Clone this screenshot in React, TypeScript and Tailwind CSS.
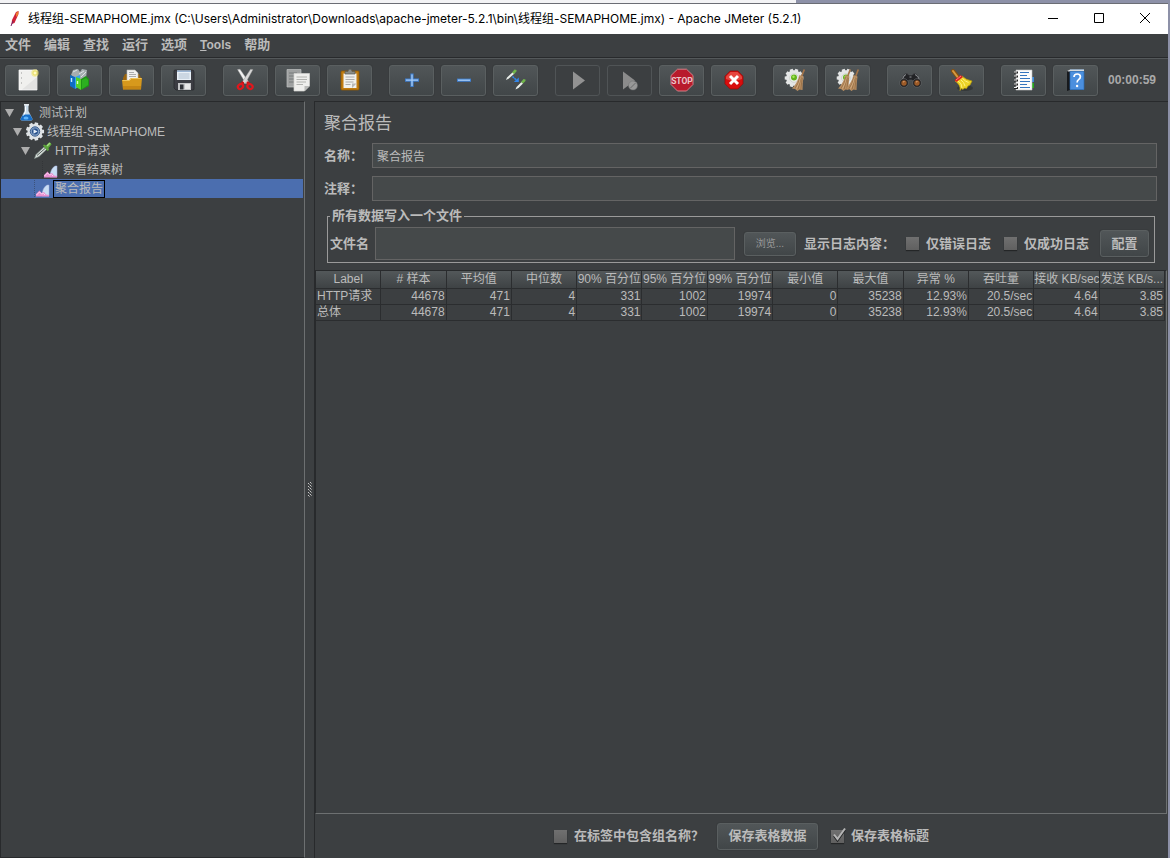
import { useState, type ReactNode } from "react";

const SANS = "font-['Liberation_Sans','Noto_Sans_CJK_SC',sans-serif]";

function Icon({ children }: { children: ReactNode }) {
  return (
    <svg width="26" height="24" viewBox="0 0 26 24" fill="none" aria-hidden="true">
      {children}
    </svg>
  );
}

function gearPath(cx: number, cy: number, inner: number, outer: number, teeth: number) {
  const points: string[] = [];
  for (let i = 0; i < teeth; i++) {
    const step = (Math.PI * 2) / teeth;
    const corners: [number, number][] = [
      [-0.36, inner],
      [-0.26, outer],
      [0.26, outer],
      [0.36, inner],
    ];
    corners.forEach(([t, r]) => {
      const a = (i + t) * step;
      points.push(`${(cx + r * Math.cos(a)).toFixed(2)} ${(cy + r * Math.sin(a)).toFixed(2)}`);
    });
  }
  return `M${points.join("L")}Z`;
}

function Gear() {
  return (
    <>
      <path d={gearPath(11, 10, 7.8, 9.4, 10)} fill="#e4e6e6" />
      <circle cx="11" cy="10" r="4.2" fill="#f4f5f3" stroke="#c4c8c2" strokeWidth=".8" />
      <circle cx="11" cy="9.5" r="3" fill="#62b31c" />
      <circle cx="10.5" cy="8.8" r="1.2" fill="#a5e85a" />
    </>
  );
}

function Besom({ x }: { x: number }) {
  return (
    <g transform={`translate(${x} 0)`}>
      <path d="M21.3 1.5 18.8 8" stroke="#a5754a" strokeWidth="1.7" />
      <path d="M16.5 7 20.5 8.5Q19.5 15 19.5 22L16.5 21.5 14.5 23 12 21 9 20.5Q14.5 15 16.5 7Z" fill="#b98f63" />
      <path d="M17 9Q15.5 16 12 20.5M18 9.5 15 21.5M19.2 10 17.8 21.5" stroke="#8f673e" strokeWidth=".7" />
      <path d="M17.5 9.5Q16.500 15 13.5 20.5" stroke="#dcb88c" strokeWidth=".7" />
    </g>
  );
}

const icons: Record<string, ReactNode> = {
  new: (
    <Icon>
      <path d="M4 2H22V22H4Z" fill="#f0f0ee" stroke="#fff" strokeWidth=".7" />
      <path d="M7 21.5H22V9Z" fill="#e2e2e1" />
      <path d="M6 5h1M6 10h1M6 15h1" stroke="#9a9a9a" />
      <circle cx="20" cy="5" r="3.7" fill="#f0e56c" opacity=".6" />
      <circle cx="20" cy="5" r="2" fill="#fffac4" stroke="#e1d74c" strokeWidth=".7" />
    </Icon>
  ),
  templates: (
    <Icon>
      <path d="M4 7 6 2l5-1 2 3 2-3 5 1-1 8-8 3Z" fill="#a5adb0" />
      <path d="M6 4l4-2M12 6l5-3M14 9l5-5" stroke="#dde2e4" />
      <path d="M3 7l5 2v12l-5-3Z" fill="#0d6cc4" />
      <path d="M8 9l5-2v11l-5 3Z" fill="#38a3ec" />
      <path d="M4.5 10v4" stroke="#bfe4ff" strokeWidth="1.4" />
      <path d="M9 9l5 2v11l-5-3Z" fill="#53d327" />
      <path d="M14 11l5-3 3 3v7l-8 4Z" fill="#1d9316" />
      <path d="M15 12l4-2 2 2v5l-6 4Z" fill="#2caf20" />
      <path d="M10.5 13v3" stroke="#d5ffc5" strokeWidth="1.4" />
    </Icon>
  ),
  open: (
    <Icon>
      <path d="M4 10 6 6h14l2 4v11H4Z" fill="#9a640d" />
      <path d="M8 2h8l3 3v9H8Z" fill="#f2f2f0" stroke="#bcbcba" strokeWidth=".6" />
      <path d="M10 4.5h5M10 6.5h7M10 8.5h7" stroke="#9a9a9a" strokeWidth=".8" />
      <path d="M3 12h7l2-2h11l-1 11.5H4Z" fill="#d7991c" />
      <path d="M3.5 12.5h7l2-2h10" stroke="#f3ca60" strokeWidth=".9" />
      <path d="M4 18h18v3.5H4Z" fill="#b9790f" opacity=".6" />
    </Icon>
  ),
  save: (
    <Icon>
      <path d="M3 3q0-1 1-1h17q2 0 2 2v17q0 1-1 1H5l-2-2Z" fill="#3c3d43" stroke="#24252a" strokeWidth=".7" />
      <path d="M6 2.5h14v9.5H6Z" fill="#e9f0f7" />
      <path d="M6 2.5h14v1.5H6Z" fill="#9cb6d4" />
      <path d="M7.5 6h11M7.5 8h11M7.5 10h11" stroke="#9eb1c5" strokeWidth=".8" />
      <path d="M7 15h13v7H7Z" fill="#c4c5c7" />
      <path d="M9 16.5h3.5v5H9Z" fill="#303237" />
      <path d="M14 16h5v5h-5Z" fill="#e8e8e8" />
    </Icon>
  ),
  cut: (
    <Icon>
      <path d="M4.500 1.500 7 1.300 15.500 13.500 13 16Z" fill="#f1f1f1" stroke="#999" strokeWidth=".4" />
      <path d="M20 1.500 17.500 1.300 9.500 13.500 12 16Z" fill="#d8d8d8" stroke="#888" strokeWidth=".4" />
      <path d="M10.5 14l-2 2M14 14l2 2" stroke="#c51117" strokeWidth="2.6" />
      <ellipse cx="7.5" cy="18.5" rx="2.8" ry="2.2" stroke="#e0171d" strokeWidth="2.2" transform="rotate(-35 7.5 18.5)" />
      <ellipse cx="17" cy="18.5" rx="2.8" ry="2.2" stroke="#e0171d" strokeWidth="2.2" transform="rotate(35 17 18.5)" />
    </Icon>
  ),
  copy: (
    <Icon>
      <path d="M2 1.5h14V19H2Z" fill="#9fa1a1" stroke="#bfc0c0" strokeWidth=".7" />
      <path d="M4 5h8M4 8h8M4 11h6M4 14h6" stroke="#737676" strokeWidth=".9" />
      <path d="M9 5.5h15.5V18l-5 5H9Z" fill="#eeeeec" stroke="#d2d2d0" strokeWidth=".7" />
      <path d="M11.5 9H22M11.5 11.5H22M11.5 14H21M11.5 16.5H18" stroke="#a9aaa8" strokeWidth=".9" />
      <path d="M19.5 23v-5h5Z" fill="#b9bab8" />
    </Icon>
  ),
  paste: (
    <Icon>
      <rect x="4" y="3" width="18" height="19" rx="1" fill="#c17d11" stroke="#8f5902" strokeWidth=".8" />
      <path d="M6.5 5.5h13V20h-13Z" fill="#f1f1ee" />
      <path d="M8.5 9h9M8.5 11.5h9M8.5 14h8M8.5 16.5h5" stroke="#a4a4a1" strokeWidth=".9" />
      <path d="M15 20v-4.5h4.5Z" fill="#b8b8b5" />
      <path d="M8 6V3.5h3Q11 1 13 1t2 2.5h3V6Z" fill="#8b8d88" stroke="#575955" strokeWidth=".7" />
    </Icon>
  ),
  plus: (
    <Icon>
      <path d="M13 5.5v13.5M6 12.2h14" stroke="#3f7fd0" strokeWidth="3.2" />
      <path d="M13 6.5v11.5M7 12.2h12" stroke="#a9cdf5" strokeWidth="1.3" />
    </Icon>
  ),
  minus: (
    <Icon>
      <path d="M6 12.2h14" stroke="#3f7fd0" strokeWidth="3.2" />
      <path d="M7 12.2h12" stroke="#a9cdf5" strokeWidth="1.3" />
    </Icon>
  ),
  toggle: (
    <Icon>
      <path d="M3 12l1-2.5L10 4l1.5 1.5-6 5.3Z" fill="#e9eeea" />
      <path d="M9 4.5l2.5-3 2 .5v1.5L11 6Z" fill="#71b54b" />
      <path d="M12.5 21.5l1-2.5 5-5 1.5 1.5-4.5 4.5Z" fill="#e9eeea" />
      <path d="M18 14l2.5-3 2 .5V13L20 15.5Z" fill="#71b54b" />
      <path d="M9.5 8.5l4.5 4" stroke="#3186eb" strokeWidth="1.6" strokeDasharray="2 .6" />
      <path d="M15.8 9.5V14h-5Z" fill="#3186eb" />
    </Icon>
  ),
  play: (
    <Icon>
      <path d="M8 3.5v18L20 12.5Z" fill="#929292" />
    </Icon>
  ),
  playNoPause: (
    <Icon>
      <path d="M6 3.5v18L18 12.5Z" fill="#8b8b8b" />
      <circle cx="16" cy="17.5" r="4.5" fill="#989898" stroke="#6c6e6e" strokeWidth=".5" />
      <path d="M13.5 20l5-5" stroke="#696b6b" />
    </Icon>
  ),
  stop: (
    <Icon>
      <path d="M8.5 1.2h9L24 7.5v9L17.5 23h-9L2 16.5v-9Z" fill="#b81b2c" stroke="#d28087" />
      <text x="13" y="15.5" textAnchor="middle" fontSize="8.5" fontWeight="700" fontFamily="Roboto, sans-serif" fill="#ecc6ca">
        STOP
      </text>
    </Icon>
  ),
  shutdown: (
    <Icon>
      <path d="M9.2 3h7.6L22 8.2v7.6L16.8 21H9.2L4 15.8V8.2Z" fill="#d80d0d" stroke="#8f0a0a" strokeWidth=".7" />
      <path d="M9.5 4h7L21 8.500V11Q13 14 5 11V8.500Z" fill="#f06a5f" opacity=".6" />
      <path d="M9 8l8 8m0-8-8 8" stroke="#fff" strokeWidth="3" />
    </Icon>
  ),
  clear: (
    <Icon>
      <Gear />
      <Besom x={0} />
    </Icon>
  ),
  clearAll: (
    <Icon>
      <Gear />
      <Besom x={-6} />
      <Besom x={2} />
    </Icon>
  ),
  search: (
    <Icon>
      <path d="M3 13 7 6.5Q10 4 12 7h3q2-3 5-.5L24 13l-5 3-4-4h-3l-4 4Z" fill="#222326" stroke="#55575a" strokeWidth=".6" />
      <path d="M7 8l2-1.5M18 6.5l2 1.5M5.5 11l1.5-3M22 11l-1.5-3M12.5 9h2" stroke="#94979b" />
      <circle cx="7" cy="15" r="4.3" fill="#1e1e20" stroke="#66686a" strokeWidth=".7" />
      <circle cx="20" cy="15" r="4.3" fill="#1e1e20" stroke="#66686a" strokeWidth=".7" />
      <circle cx="7" cy="15" r="2.7" fill="#9d5b28" />
      <circle cx="20" cy="15" r="2.7" fill="#9d5b28" />
      <path d="M6 14l1.500-.5M19 14l1.500-.5" stroke="#e0a777" />
    </Icon>
  ),
  resetSearch: (
    <Icon>
      <ellipse cx="16" cy="20" rx="8" ry="3" fill="#252728" opacity=".5" />
      <path d="M4 3l5 6" stroke="#89500d" strokeWidth="4" strokeLinecap="round" />
      <path d="M4 3l4.500 6" stroke="#d49a42" strokeWidth="2" strokeLinecap="round" />
      <path d="M6 13l7-5q4 4 10 5l-2 4-2 1-1.500 2.500-2-.5-1.500 1.500-1.500-1-1.500 2Q12 17 6 13Z" fill="#ecd327" stroke="#b79c08" strokeWidth=".7" />
      <path d="M9 13q4 2 4 7M12 12q3 2 4 6M13.5 10.500q3 3 6 4" stroke="#fff27b" />
      <path d="M5.5 12l6-5 2.500 2-6.500 5Z" fill="#d82023" />
      <path d="M7 12l5-4" stroke="#ff8177" />
    </Icon>
  ),
  log: (
    <Icon>
      <path d="M19 9h4v5h-4Z" fill="#3989db" />
      <path d="M19 15h4v5h-4Z" fill="#24a91b" />
      <path d="M5 2h16v20H5Z" fill="#fbfbfb" stroke="#c3c4c4" strokeWidth=".6" />
      <path d="M3 4.5h4M3 8.5h4M3 12.5h4M3 16.5h4M3 20h4" stroke="#222" strokeWidth="2.2" />
      <path d="M3 4h3M3 8h3M3 12h3M3 16h3M3 19.5h3" stroke="#eee" />
      <path d="M9 4.5h9M9 7.5h7M9 10.5h10M9 13.5h10M9 16.5h7M9 19.5h10" stroke="#3474bd" />
    </Icon>
  ),
  help: (
    <Icon>
      <path d="M4 3 7 1.5V22l-3 1Z" fill="#17191c" />
      <path d="M7 1.5h14V22H7Z" fill="#4a90df" />
      <path d="M4 3 7 1.5h14v2H5.5Z" fill="#d5d9dc" />
      <path d="M7 3.5h14v18H7Z" fill="#4b8fde" stroke="#2968af" strokeWidth=".7" />
      <path d="M11 9q0-3 3.200-3t3.200 2.800q0 1.600-1.800 2.800-1.500 1-1.500 3" stroke="#fff" strokeWidth="1.7" />
      <circle cx="14.1" cy="18" r="1.2" fill="#fff" />
    </Icon>
  ),
};

type Tool = { icon: string; label: string; disabled?: boolean };

const toolGroups: Tool[][] = [
  [
    { icon: "new", label: "新建" },
    { icon: "templates", label: "模板" },
    { icon: "open", label: "打开" },
    { icon: "save", label: "保存" },
  ],
  [
    { icon: "cut", label: "剪切" },
    { icon: "copy", label: "复制" },
    { icon: "paste", label: "粘贴" },
  ],
  [
    { icon: "plus", label: "全部展开" },
    { icon: "minus", label: "全部折叠" },
    { icon: "toggle", label: "切换" },
  ],
  [
    { icon: "play", label: "启动", disabled: true },
    { icon: "playNoPause", label: "不停顿开始", disabled: true },
    { icon: "stop", label: "停止" },
    { icon: "shutdown", label: "关闭" },
  ],
  [
    { icon: "clear", label: "清除" },
    { icon: "clearAll", label: "清除全部" },
  ],
  [
    { icon: "search", label: "查找" },
    { icon: "resetSearch", label: "重置查找" },
  ],
  [
    { icon: "log", label: "函数助手" },
    { icon: "help", label: "帮助" },
  ],
];

const treeIcons: Record<string, ReactNode> = {
  flask: (
    <svg width="20" height="19" viewBox="0 0 20 19" fill="none" aria-hidden="true">
      <path d="M7.5 2h4v6l4 8q0 1.500-2 1.500h-8q-2 0-2-1.500l4-8Z" fill="#c9dceb" />
      <path d="M6 11.5h7l2.500 4.500q0 1.500-2 1.500h-8q-2 0-2-1.500Z" fill="#176fc8" />
      <path d="M7 1.8h5" stroke="#eef4f9" strokeWidth="1.5" />
      <path d="M8.5 3.5v5l-2 4" stroke="#fff" />
      <ellipse cx="9" cy="15" rx="2.5" ry="1.5" fill="#5db3fa" />
    </svg>
  ),
  gear: (
    <svg width="20" height="19" viewBox="0 0 20 19" fill="none" aria-hidden="true">
      <path d={gearPath(10, 9.5, 7.5, 9.2, 9)} fill="#dfe3e6" />
      <circle cx="10" cy="9.5" r="4.7" fill="#7f9cc0" stroke="#3f6292" />
      <circle cx="10" cy="9.5" r="3" fill="#27508c" />
      <path d="M8.5 7.2l4 2.3-4 2.3Z" fill="#e3edf7" />
    </svg>
  ),
  pipette: (
    <svg width="20" height="19" viewBox="0 0 20 19" fill="none" aria-hidden="true">
      <path d="M1.5 17.5 3 13.500 11 6l2.500 2.500L6 15.500Z" fill="#d9dfdc" stroke="#81918a" strokeWidth=".6" />
      <path d="M4 14.5l8-7" stroke="#55605b" />
      <path d="M10 4.5l1-1 2 1L16 1.500q2-.5 2.500 2L15.500 7l.5 2-1.500 1Z" fill="#5ea63c" />
      <path d="M14 5l3-3" stroke="#a7db85" strokeWidth="1.4" />
    </svg>
  ),
  chart: (
    <svg width="20" height="19" viewBox="0 0 20 19" fill="none" aria-hidden="true">
      <path d="M1.5 1v17" stroke="#25282a" strokeDasharray="1 1" opacity=".4" />
      <path d="M9 17q0-8 5-11h2v11Z" fill="#c9def5" stroke="#a3acd9" strokeWidth=".5" />
      <path d="M3 17.5V15l3.500-3.500 2 2.500 2.500-1 2 2.500 3 .5v1.500Z" fill="#ea8fd0" />
      <path d="M3.5 16 6.500 13l2 2 2-.5 1.500 1.500" stroke="#fbd5f2" />
    </svg>
  ),
};

type TreeNode = { label: string; icon: string; indent: string; open?: boolean };

const tree: TreeNode[] = [
  { label: "测试计划", icon: "flask", indent: "pl-1", open: true },
  { label: "线程组-SEMAPHOME", icon: "gear", indent: "pl-3", open: true },
  { label: "HTTP请求", icon: "pipette", indent: "pl-5", open: true },
  { label: "察看结果树", icon: "chart", indent: "pl-7" },
  { label: "聚合报告", icon: "chart", indent: "pl-5" },
];

const columns = [
  "Label",
  "# 样本",
  "平均值",
  "中位数",
  "90% 百分位",
  "95% 百分位",
  "99% 百分位",
  "最小值",
  "最大值",
  "异常 %",
  "吞吐量",
  "接收 KB/sec",
  "发送 KB/s...",
];

const stats = ["44678", "471", "4", "331", "1002", "19974", "0", "35238", "12.93%", "20.5/sec", "4.64", "3.85"];
const rows = [
  ["HTTP请求", ...stats],
  ["总体", ...stats],
];

const raised =
  "rounded-[3px] border border-[#5a5f60] bg-linear-to-b from-[#515658] to-[#414648] shadow-[0_0_0_1px_#393c3e]";
const field = "min-w-0 flex-1 border border-[#646464] bg-[#45494a] px-1 text-xs text-[#bbbbbb] outline-none";

function Check({ label, checked = false }: { label: string; checked?: boolean }) {
  return (
    <label className="flex shrink-0 items-center gap-[7px] whitespace-nowrap">
      <span className="relative flex">
        <input
          type="checkbox"
          defaultChecked={checked}
          className="peer size-[13px] appearance-none bg-linear-to-b from-[#707070] to-[#606060] shadow-[0_1px_1px_#242627]"
        />
        <svg
          className="pointer-events-none absolute -top-1 left-0 hidden peer-checked:block"
          width="17"
          height="17"
          viewBox="0 0 17 17"
          fill="none"
          aria-hidden="true"
        >
          <path d="M3 10l3.500 4.500L14 4" stroke="#222425" strokeWidth="2" />
          <path d="M3 8.500l3.500 4.500L14 2.500" stroke="#b4b4b4" strokeWidth="2" />
        </svg>
      </span>
      {label}
    </label>
  );
}

function TitleBar() {
  return (
    <header className="flex h-[30px] items-center bg-white text-black">
      <svg className="mx-[7px] shrink-0" width="14" height="20" viewBox="0 0 14 20" aria-hidden="true">
        <path d="M9 3 11.500 2v3L7.500 14 4.500 15l.5-4Z" fill="#cf2238" />
        <path d="M9 4l2.500-2-.5 4-2 2Z" fill="#ee7b2d" />
        <path d="M6 12l-2 5" stroke="#702066" />
      </svg>
      <h1 className="min-w-0 flex-1 truncate font-['Inter','Noto_Sans_CJK_SC',sans-serif] text-xs">
        {"线程组-SEMAPHOME.jmx (C:\\Users\\Administrator\\Downloads\\apache-jmeter-5.2.1\\bin\\线程组-SEMAPHOME.jmx) - Apache JMeter (5.2.1)"}
      </h1>
      <div className="flex">
        <button aria-label="最小化" className="flex h-[30px] w-[46px] items-center justify-center">
          <svg width="12" height="12" viewBox="0 0 12 12" stroke="#000">
            <path d="M1 5.500h10" />
          </svg>
        </button>
        <button aria-label="最大化" className="flex h-[30px] w-[46px] items-center justify-center">
          <svg width="12" height="12" viewBox="0 0 12 12" fill="none" stroke="#000">
            <path d="M1.500 .5h9v9h-9Z" />
          </svg>
        </button>
        <button aria-label="关闭窗口" className="flex h-[30px] w-[46px] items-center justify-center">
          <svg width="12" height="12" viewBox="0 0 12 12" stroke="#000">
            <path d="M1 0l10 10M11 0 1 10" />
          </svg>
        </button>
      </div>
    </header>
  );
}

function MenuBar() {
  return (
    <nav className="flex h-[23px] items-center gap-[13px] pb-px pl-[5px] text-[13px] font-bold">
      {["文件", "编辑", "查找", "运行", "选项"].map((item) => (
        <button key={item}>{item}</button>
      ))}
      <button className="text-xs">
        <span className="underline">T</span>ools
      </button>
      <button>帮助</button>
    </nav>
  );
}

function ToolBar() {
  return (
    <div className="flex h-[43px] items-center gap-[17px] border-t border-[#54585a] pl-[5px]">
      {toolGroups.map((group, i) => (
        <div key={i} className="flex gap-[7px]">
          {group.map((tool) => (
            <button
              key={tool.label}
              aria-label={tool.label}
              disabled={tool.disabled}
              className={
                tool.disabled
                  ? "flex h-[31px] w-[45px] items-center justify-center rounded-[3px] border border-[#505456]"
                  : `flex h-[31px] w-[45px] items-center justify-center ${raised}`
              }
            >
              {icons[tool.icon]}
            </button>
          ))}
        </div>
      ))}
      <time className="-ml-[7px] text-xs font-bold text-[#a9a9a9]">00:00:59</time>
    </div>
  );
}

function Tree() {
  const [selected, setSelected] = useState(4);
  return (
    <aside className="w-[305px] shrink-0 border border-[#282a2c] border-r-[#6d7071] pr-px">
      <ul className="pt-px text-xs">
        {tree.map((node, i) => (
          <li key={node.label}>
            <button
              onClick={() => setSelected(i)}
              className={`flex h-[19px] w-full items-center ${node.indent} ${i === selected ? "bg-[#4b6eaf]" : ""}`}
            >
              <svg className="mr-[3px] shrink-0" width="9" height="8" viewBox="0 0 9 8" aria-hidden="true">
                {node.open && <path d="M0 0h9L4.500 8Z" fill="#adadad" />}
              </svg>
              {treeIcons[node.icon]}
              <span className={`border px-px leading-4 ${i === selected ? "border-black" : "border-transparent"}`}>
                {node.label}
              </span>
            </button>
          </li>
        ))}
      </ul>
    </aside>
  );
}

function Splitter() {
  return (
    <div className="flex w-[9px] shrink-0 items-center justify-center pt-5">
      <svg width="5" height="16" viewBox="0 0 5 16" aria-hidden="true">
        {[0, 3, 6, 9, 12].map((y) => (
          <g key={y} fill="#c8c8c8">
            <path d={`M3 ${y}h1v1h-1ZM1 ${y + 1}h1v1h-1Z`} />
            <path d={`M4 ${y + 1}h1v1h-1ZM2 ${y + 2}h1v1h-1Z`} fill="#8a8a8a" />
          </g>
        ))}
      </svg>
    </div>
  );
}

function Report() {
  return (
    <main className="flex min-w-0 flex-1 flex-col border-t border-l border-[#282a2c]">
      <section className="pr-[11px] pl-[9px]">
        <h2 className="mt-[10px] mb-[7px] text-[17px] leading-6">聚合报告</h2>
        <div className="flex flex-col gap-2 text-[13px] font-bold">
          <div className="flex h-[25px] items-center">
            <label htmlFor="name" className="w-12">
              名称：
            </label>
            <input id="name" defaultValue="聚合报告" className={`${field} h-full font-normal`} />
          </div>
          <div className="flex h-[25px] items-center">
            <label htmlFor="comment" className="w-12">
              注释：
            </label>
            <input id="comment" className={`${field} h-full`} />
          </div>
        </div>
      </section>

      <fieldset className="mt-1 mr-[13px] ml-3 min-w-0 border border-[#9a9a9a] pr-[5px] pb-0.5 pl-0.5 text-[13px] font-bold">
        <legend className="px-0.5 leading-[22px]">所有数据写入一个文件</legend>
        <div className="flex items-center">
          <label htmlFor="file" className="mr-[6px] shrink-0">
            文件名
          </label>
          <input id="file" className={`${field} mr-[9px] h-[33px]`} />
          <button className={`mr-2 h-6 w-[52px] shrink-0 text-[10px] font-normal text-[#999999] ${raised}`}>
            浏览...
          </button>
          <span className="mr-[11px] shrink-0">显示日志内容：</span>
          <div className="mr-[11px] flex gap-[13px]">
            <Check label="仅错误日志" />
            <Check label="仅成功日志" />
          </div>
          <button className={`h-[27px] w-[49px] shrink-0 ${raised}`}>配置</button>
        </div>
      </fieldset>

      <div className="mt-[7px] mr-px flex-1 border border-[#282a2c] border-r-[#6d7071] border-b-[#6d7071] pr-px">
        <table className="w-full table-fixed border-separate border-spacing-0 text-xs">
          <thead>
            <tr className="h-[18px] bg-linear-to-b from-[#53585a] to-[#3d4143]">
              {columns.map((name) => (
                <th
                  key={name}
                  className="overflow-hidden border-r border-b border-[#2b2d2f] p-0 text-center leading-[17px] font-normal whitespace-nowrap"
                >
                  {name}
                </th>
              ))}
            </tr>
          </thead>
          <tbody>
            {rows.map((row) => (
              <tr key={row[0]} className="h-4">
                {row.map((value, i) => (
                  <td
                    key={i}
                    className={`overflow-hidden border-r border-b border-[#2b2d2f] px-px py-0 leading-[15px] whitespace-nowrap ${i === 0 ? "text-left" : "text-right"}`}
                  >
                    {value}
                  </td>
                ))}
              </tr>
            ))}
          </tbody>
        </table>
      </div>

      <footer className="flex h-11 shrink-0 items-center justify-center gap-[13px] text-[13px] font-bold">
        <Check label="在标签中包含组名称？" />
        <button className={`h-[27px] w-[101px] ${raised}`}>保存表格数据</button>
        <Check label="保存表格标题" checked />
      </footer>
    </main>
  );
}

export default function App() {
  return (
    <div className={`flex min-h-screen flex-col bg-[#8d91a8] ${SANS} text-[#bbbbbb]`}>
      <div className="flex h-[3px]">
        <div className="w-[68%] bg-[#f3f3f5]" />
      </div>
      <div className="mr-0.5 flex flex-1 flex-col border-t border-[#6b6d74] bg-[#3c3f41]">
        <TitleBar />
        <MenuBar />
        <div className="border-t border-[#282a2c]">
          <ToolBar />
        </div>
        <div className="flex flex-1">
          <Tree />
          <Splitter />
          <Report />
        </div>
      </div>
    </div>
  );
}
